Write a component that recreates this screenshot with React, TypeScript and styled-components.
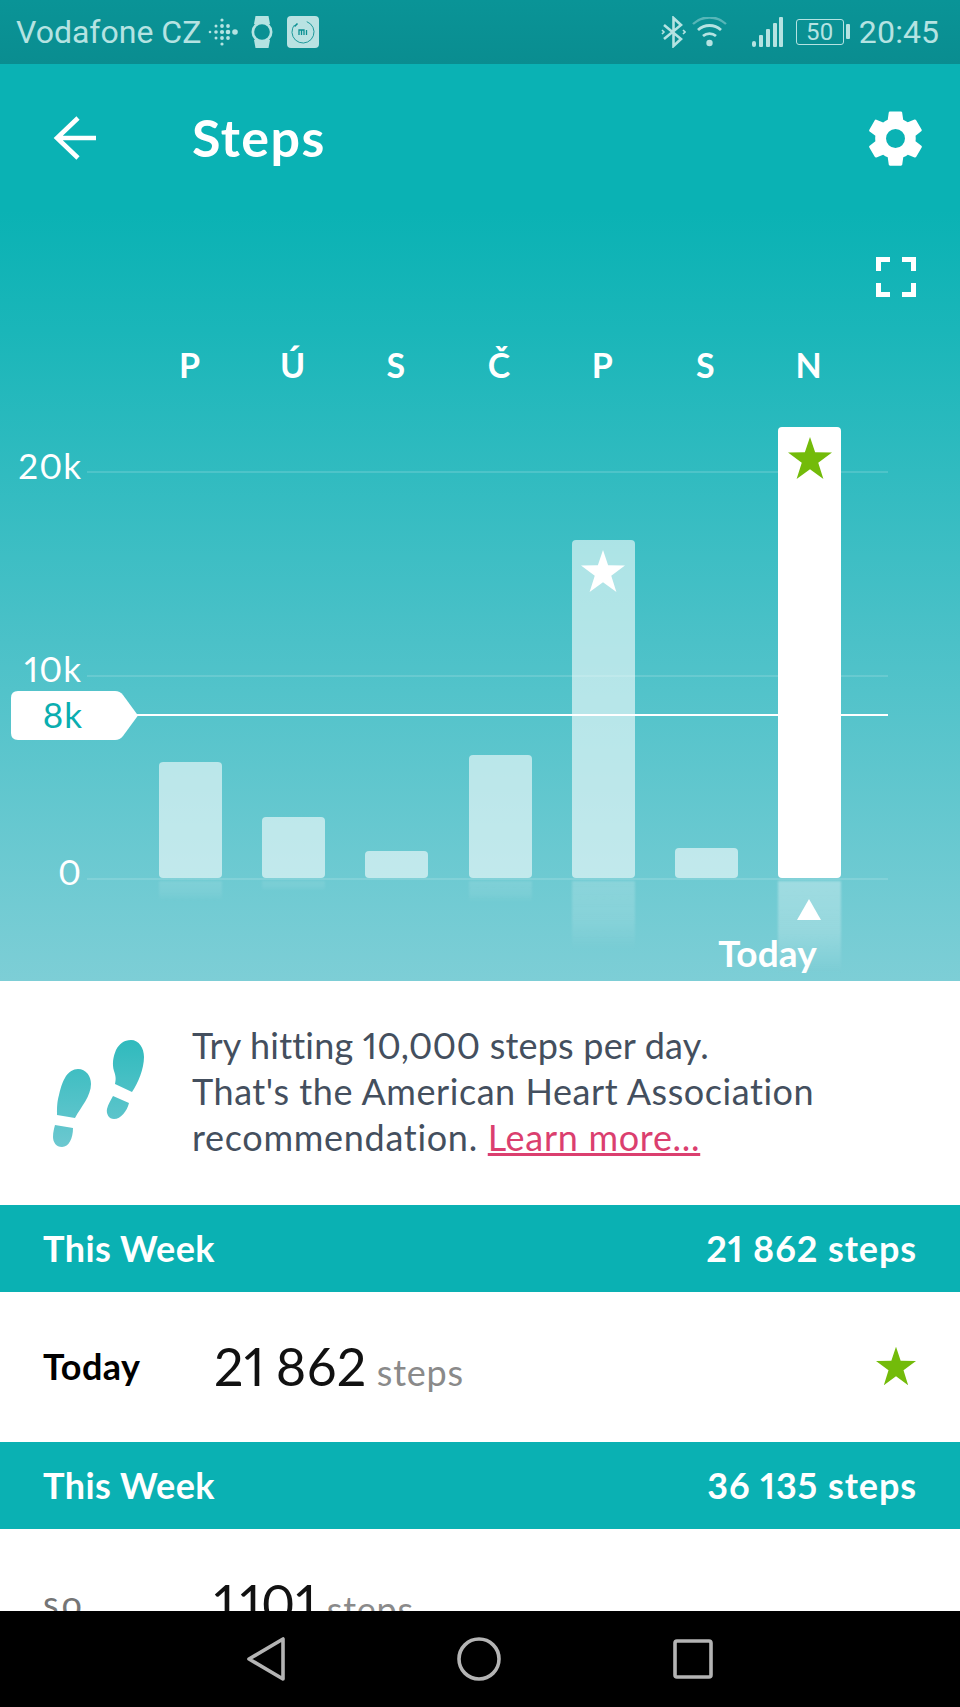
import React from "react";
import styled, { createGlobalStyle } from "styled-components";

const GlobalStyle = createGlobalStyle`
  html, body {
    margin: 0;
    padding: 0;
    background: #ffffff;
  }
  * {
    box-sizing: border-box;
  }
`;

const FONT = `"Lato", "Open Sans", sans-serif`;

const Screen = styled.div`
  width: 960px;
  height: 1707px;
  overflow: hidden;
  display: flex;
  flex-direction: column;
  background: #ffffff;
  font-family: ${FONT};
  font-variant-numeric: proportional-nums;
`;

const StatusBar = styled.div`
  flex: 0 0 64px;
  display: flex;
  align-items: center;
  padding: 0 21px 0 16px;
  background: linear-gradient(#0a9497, #0a8d90);
  color: #b5e3e2;
  font-family: "Roboto", sans-serif;
  font-size: 32px;
`;

const StatusIcon = styled.div<{ $gap: number }>`
  display: flex;
  margin-left: ${(p) => p.$gap}px;
`;

const Spacer = styled.div`
  flex: 1;
`;

const Hero = styled.div`
  flex: 0 0 917px;
  display: flex;
  flex-direction: column;
  background: linear-gradient(
    #0ab2b4 0%,
    #0ab2b4 16%,
    #1ab6b9 29%,
    #4bc1c8 63%,
    #7dced6 100%
  );
  color: #ffffff;
`;

const Header = styled.div`
  flex: 0 0 148px;
  display: flex;
  align-items: center;
  padding: 0 32px 0 53px;
`;

const Title = styled.div`
  margin-left: 95px;
  padding-bottom: 2px;
  font-size: 52px;
  font-weight: 700;
  letter-spacing: 1.4px;
  flex: 1;
`;

const FullscreenRow = styled.div`
  display: flex;
  justify-content: flex-end;
  padding: 0 44px 0 0;
  height: 40px;
  margin-top: 45px;
`;

const DayRow = styled.div`
  display: grid;
  grid-template-columns: repeat(7, 63px);
  column-gap: 40.2px;
  margin: 48px 0 0 158px;
  height: 40px;
`;

const Day = styled.div`
  text-align: center;
  font-size: 34px;
  font-weight: 700;
  line-height: 40px;
`;

const Plot = styled.div`
  position: relative;
  flex: 0 0 451px;
  margin-top: 42px;
  padding-left: 159px;
  display: flex;
  align-items: flex-end;
  gap: 40.2px;
`;

const GridLine = styled.div<{ $y: number }>`
  position: absolute;
  left: 87px;
  right: 72px;
  top: ${(p) => p.$y}px;
  height: 2px;
  background: rgba(255, 255, 255, 0.14);
`;

const AxisLabel = styled.div<{ $y: number }>`
  position: absolute;
  right: 878px;
  top: ${(p) => p.$y - 24}px;
  font-size: 35px;
  letter-spacing: 1px;
  line-height: 44px;
`;

const BarSlot = styled.div`
  position: relative;
  width: 63px;
  height: 100%;
  display: flex;
  align-items: flex-end;
`;

const Bar = styled.div<{ $h: number; $today?: boolean }>`
  width: 100%;
  height: ${(p) => p.$h}px;
  display: flex;
  justify-content: center;
  padding-top: 9px;
  border-radius: 4px;
  background: ${(p) => (p.$today ? "#ffffff" : "rgba(255, 255, 255, 0.58)")};
`;

const Reflection = styled.div<{ $h: number; $alpha: number }>`
  position: absolute;
  left: 0;
  right: 0;
  top: calc(100% + 3px);
  height: ${(p) => p.$h}px;
  filter: blur(1px);
  background: linear-gradient(
    rgba(255, 255, 255, ${(p) => p.$alpha}),
    rgba(255, 255, 255, ${(p) => p.$alpha * 0.7}) 55%,
    rgba(255, 255, 255, 0)
  );
`;

const GoalLine = styled.div`
  position: absolute;
  left: 130px;
  right: 72px;
  top: 287px;
  height: 2px;
  background: #ffffff;
`;

const GoalTag = styled.div`
  position: absolute;
  left: 11px;
  top: 264px;
  width: 127px;
  height: 49px;
  padding: 0 23px 4px 0;
  display: flex;
  align-items: center;
  justify-content: center;
  background: #ffffff;
  color: #0aaeb0;
  font-size: 35px;
  letter-spacing: 1px;
  clip-path: path(
    "M7 0H104Q109 0 112 4L127 24.5L112 45Q109 49 104 49H7Q0 49 0 42V7Q0 0 7 0Z"
  );
`;

const TodayMark = styled.div`
  flex: 1;
  position: relative;
  display: flex;
  flex-direction: column;
  align-items: flex-end;
`;

const Triangle = styled.div`
  position: absolute;
  left: 797px;
  top: 21px;
  width: 0;
  height: 0;
  border-left: 12px solid transparent;
  border-right: 12px solid transparent;
  border-bottom: 21px solid #ffffff;
`;

const TodayText = styled.div`
  margin: 54px 143px 0 0;
  font-size: 37px;
  font-weight: 700;
  letter-spacing: 0.2px;
  line-height: 42px;
`;

const Scroller = styled.div`
  flex: 1;
  min-height: 0;
  overflow: hidden;
  display: flex;
  flex-direction: column;
`;

const Tip = styled.div`
  flex: 0 0 224px;
  display: flex;
  align-items: center;
  padding: 0 0 4px 53px;
`;

const FootprintBox = styled.div`
  display: flex;
  margin-top: 4px;
`;

const TipText = styled.div`
  margin-left: 47px;
  font-size: 36px;
  line-height: 46px;
  color: #444f5e;
`;

const TipLine = styled.div<{ $track: number }>`
  letter-spacing: ${(p) => p.$track}px;
`;

const TipLink = styled.span`
  color: #db3f6f;
  text-decoration: underline;
`;

const Band = styled.div`
  flex: 0 0 87px;
  display: flex;
  align-items: center;
  justify-content: space-between;
  padding: 0 43px 2px;
  background: #0ab1b3;
  color: #ffffff;
  font-size: 36px;
  font-weight: 700;
  letter-spacing: 0.4px;
`;

const BandTotal = styled.span`
  letter-spacing: 0.9px;
`;

const Row = styled.div`
  flex: 0 0 150px;
  display: flex;
  align-items: center;
  padding: 0 44px 3px 43px;
`;

const RowDay = styled.div<{ $muted?: boolean }>`
  width: 171px;
  font-size: 36px;
  letter-spacing: ${(p) => (p.$muted ? 3 : 0.5)}px;
  font-weight: ${(p) => (p.$muted ? 400 : 700)};
  color: ${(p) => (p.$muted ? "#757575" : "#000000")};
`;

const RowValue = styled.div<{ $space: number }>`
  flex: 1;
  font-size: 52px;
  letter-spacing: 0.5px;
  word-spacing: ${(p) => p.$space}px;
  color: #111111;
`;

const RowUnit = styled.span`
  margin-left: 10px;
  font-size: 36px;
  letter-spacing: 0.8px;
  color: #8a8a8a;
`;

const NavBar = styled.div`
  flex: 0 0 96px;
  display: flex;
  align-items: center;
  justify-content: center;
  gap: 172px;
  background: #000000;
`;

function Star({ size, color }: { size: number; color: string }) {
  return (
    <svg width={size} height={size} viewBox="0 0 24 24" fill={color}>
      <path d="M12 .5l2.8 8.4L24 9l-7.5 5.6 2.8 8.9-7.3-5.3-7.3 5.3 2.8-8.9L0 9l9.2-.1z" />
    </svg>
  );
}

function Fitbit() {
  const dots = [
    [2, 15, 1.3],
    [8, 9, 1.5], [8, 15, 1.8], [8, 21, 1.5],
    [14, 3, 1.6], [14, 9, 1.9], [14, 15, 2.1], [14, 21, 1.9], [14, 27, 1.6],
    [20, 9, 1.9], [20, 15, 2.3], [20, 21, 1.9],
    [27, 15, 2.8],
  ];
  return (
    <svg width="30" height="30" viewBox="0 0 30 30" fill="#b5e3e2">
      {dots.map(([x, y, r], i) => (
        <circle key={i} cx={x} cy={y} r={r} />
      ))}
    </svg>
  );
}

function Watch() {
  return (
    <svg width="22" height="32" viewBox="0 0 22 32" fill="#b5e3e2">
      <path d="M4.5 0h13l1.5 8H3zM3 24h16l-1.5 8h-13z" />
      <circle cx="11" cy="16" r="10.5" />
      <circle cx="11" cy="16" r="7.8" fill="#0a9093" />
    </svg>
  );
}

function MiFit() {
  return (
    <svg width="32" height="32" viewBox="0 0 32 32">
      <rect width="32" height="32" rx="4" fill="#b9e2e2" />
      <circle
        cx="16"
        cy="16"
        r="11"
        fill="none"
        stroke="#0a8f92"
        strokeWidth="0.8"
        strokeDasharray="55 14"
        transform="rotate(-70 16 16)"
      />
      <path d="M7.5 10.5l3-3" stroke="#0a8f92" strokeWidth="1.6" />
      <path
        d="M12 19v-5h5v5M14.5 14.5V19M19.5 14v5"
        fill="none"
        stroke="#0a8f92"
        strokeWidth="1.3"
      />
    </svg>
  );
}

function Bluetooth() {
  return (
    <svg width="25" height="32" viewBox="0 0 25 32" fill="none" stroke="#b5e3e2" strokeWidth="2.6">
      <path d="M3 9l17 14-7.5 7V2l7.5 7L3 23" />
      <path d="M1 14l2 2-2 2M22 14l2 2-2 2" strokeWidth="1.6" />
    </svg>
  );
}

function Wifi() {
  return (
    <svg width="35" height="30" viewBox="0 0 35 30" fill="none">
      <path d="M1 7a24 24 0 0 1 33 0" stroke="#b5e3e2" strokeOpacity="0.45" strokeWidth="2.4" />
      <path d="M6 13a17 17 0 0 1 23 0" stroke="#b5e3e2" strokeWidth="2.8" />
      <path d="M11 19a10 10 0 0 1 13 0" stroke="#b5e3e2" strokeWidth="2.8" />
      <circle cx="17.5" cy="26" r="3.2" fill="#b5e3e2" />
    </svg>
  );
}

function Signal() {
  return (
    <svg width="31" height="30" viewBox="0 0 31 30" fill="#b5e3e2">
      <rect x="0" y="24" width="4" height="6" rx="2" />
      <rect x="7" y="18" width="4" height="12" rx="1" />
      <rect x="14" y="12" width="4" height="18" rx="1" />
      <rect x="21" y="6" width="4" height="24" rx="1" />
      <rect x="27" y="0" width="4" height="30" rx="1" />
    </svg>
  );
}

const BatteryBox = styled.div`
  position: relative;
  width: 48px;
  height: 26px;
  margin-left: 13px;
  display: flex;
  align-items: center;
  justify-content: center;
  border: 1.5px solid #b5e3e2;
  border-radius: 3px;
  font-size: 24px;
  &::after {
    content: "";
    position: absolute;
    right: -7px;
    top: 4px;
    width: 4px;
    height: 15px;
    background: #b5e3e2;
    border-radius: 1px;
  }
`;

const Clock = styled.div`
  margin-left: 15px;
`;

function Back() {
  return (
    <svg width="44" height="44" viewBox="0 0 44 44" fill="none" stroke="#ffffff" strokeWidth="4.6">
      <path d="M43 22H4M25 2L4 22l21 20" />
    </svg>
  );
}

function Gear() {
  return (
    <svg width="65" height="65" viewBox="0 0 24 24" fill="#ffffff">
      <path d="M19.4 13c.04-.32.07-.66.07-1s-.03-.68-.07-1l2.1-1.65c.2-.15.25-.42.13-.64l-2-3.46c-.12-.22-.39-.3-.61-.22l-2.49 1a7.3 7.3 0 0 0-1.69-.98l-.38-2.65A.49.49 0 0 0 14 2h-4c-.25 0-.46.18-.49.42l-.38 2.65c-.61.25-1.17.59-1.69.98l-2.49-1a.5.5 0 0 0-.61.22l-2 3.46c-.13.22-.07.49.12.64L4.57 11c-.04.32-.07.66-.07 1s.03.68.07 1l-2.11 1.65c-.19.15-.25.42-.12.64l2 3.46c.12.22.39.3.61.22l2.49-1c.52.4 1.08.73 1.69.98l.38 2.65c.03.24.24.42.49.42h4c.25 0 .46-.18.49-.42l.38-2.65c.61-.25 1.17-.59 1.69-.98l2.49 1c.23.09.49 0 .61-.22l2-3.46c.12-.22.07-.49-.12-.64L19.4 13zM12 15.5a3.5 3.5 0 1 1 0-7 3.5 3.5 0 0 1 0 7z" />
    </svg>
  );
}

function Fullscreen() {
  return (
    <svg width="40" height="40" viewBox="0 0 40 40" fill="none" stroke="#ffffff" strokeWidth="5">
      <path d="M2.5 14V2.5H14M26 2.5h11.5V14M37.5 26v11.5H26M14 37.5H2.5V26" />
    </svg>
  );
}

function Footprints() {
  return (
    <svg width="92" height="109" viewBox="0 0 92 109">
      <defs>
        <linearGradient id="footFill" gradientUnits="userSpaceOnUse" x1="0" y1="0" x2="0" y2="108">
          <stop offset="0" stopColor="#2fbabd" />
          <stop offset="1" stopColor="#6cc8d0" />
        </linearGradient>
      </defs>
      <g fill="url(#footFill)">
        <path d="M78 1C86 1 91 9 91 18C91 30 85 44 79 53L62 45C63 40 63 38 61 32C59 25 60 18 63 11C66 5 71 1 78 1Z" />
        <path d="M60 57L76 64C74 72 68 80 61 80C56 80 53 75 54 70C55 65 58 61 60 57Z" />
        <path d="M25 30C33 30 38 37 38 45C38 57 28 68 22 79L4 76C4 68 4 63 6 56C8 47 10 42 13 37C16 33 20 30 25 30Z" />
        <path d="M2 86L20 89C20 99 16 108 9 108C3 108 0 103 0 98C0 93 1 90 2 86Z" />
      </g>
    </svg>
  );
}

function NavBack() {
  return (
    <svg width="38" height="44" viewBox="0 0 38 44" fill="none" stroke="#b4b4b4" strokeWidth="3.6" strokeLinejoin="round">
      <path d="M36 2v40L2 22z" />
    </svg>
  );
}

function NavHome() {
  return (
    <svg width="44" height="44" viewBox="0 0 44 44" fill="none" stroke="#b4b4b4" strokeWidth="3.6">
      <circle cx="22" cy="22" r="20" />
    </svg>
  );
}

function NavRecent() {
  return (
    <svg width="40" height="40" viewBox="0 0 40 40" fill="none" stroke="#b4b4b4" strokeWidth="3.6">
      <rect x="2" y="2" width="36" height="36" rx="2" />
    </svg>
  );
}

const days = ["P", "Ú", "S", "Č", "P", "S", "N"];

const bars = [
  { h: 116, ref: 20, alpha: 0.12 },
  { h: 61, ref: 10, alpha: 0.1 },
  { h: 27, ref: 0, alpha: 0 },
  { h: 123, ref: 22, alpha: 0.12 },
  { h: 338, ref: 68, alpha: 0.2, star: "#ffffff" },
  { h: 30, ref: 0, alpha: 0 },
  { h: 451, ref: 92, alpha: 0.34, star: "#73bb0a", today: true },
];

export default function App() {
  return (
    <Screen>
      <GlobalStyle />
      <StatusBar>
        <span>Vodafone CZ</span>
        <StatusIcon $gap={7}>
          <Fitbit />
        </StatusIcon>
        <StatusIcon $gap={13}>
          <Watch />
        </StatusIcon>
        <StatusIcon $gap={14}>
          <MiFit />
        </StatusIcon>
        <Spacer />
        <Bluetooth />
        <StatusIcon $gap={6}>
          <Wifi />
        </StatusIcon>
        <StatusIcon $gap={25}>
          <Signal />
        </StatusIcon>
        <BatteryBox>50</BatteryBox>
        <Clock>20:45</Clock>
      </StatusBar>
      <Hero>
        <Header>
          <Back />
          <Title>Steps</Title>
          <Gear />
        </Header>
        <FullscreenRow>
          <Fullscreen />
        </FullscreenRow>
        <DayRow>
          {days.map((d, i) => (
            <Day key={i}>{d}</Day>
          ))}
        </DayRow>
        <Plot>
          <GridLine $y={44} />
          <GridLine $y={248} />
          <GridLine $y={451} />
          <AxisLabel $y={40}>20k</AxisLabel>
          <AxisLabel $y={243}>10k</AxisLabel>
          <AxisLabel $y={446}>0</AxisLabel>
          <GoalLine />
          <GoalTag>8k</GoalTag>
          {bars.map((b, i) => (
            <BarSlot key={i}>
              <Bar $h={b.h} $today={b.today}>
                {b.star && <Star size={44} color={b.star} />}
              </Bar>
              {b.ref > 0 && <Reflection $h={b.ref} $alpha={b.alpha} />}
            </BarSlot>
          ))}
        </Plot>
        <TodayMark>
          <Triangle />
          <TodayText>Today</TodayText>
        </TodayMark>
      </Hero>
      <Scroller>
        <Tip>
          <FootprintBox>
            <Footprints />
          </FootprintBox>
          <TipText>
            <TipLine $track={0.19}>Try hitting 10,000 steps per day.</TipLine>
            <TipLine $track={0.55}>That's the American Heart Association</TipLine>
            <TipLine $track={0.7}>
              recommendation. <TipLink>Learn more...</TipLink>
            </TipLine>
          </TipText>
        </Tip>
        <Band>
          <span>This Week</span>
          <BandTotal>21 862 steps</BandTotal>
        </Band>
        <Row>
          <RowDay>Today</RowDay>
          <RowValue $space={-3}>
            21 862<RowUnit>steps</RowUnit>
          </RowValue>
          <Star size={40} color="#73bb0a" />
        </Row>
        <Band>
          <span>This Week</span>
          <BandTotal>36 135 steps</BandTotal>
        </Band>
        <Row>
          <RowDay $muted>so</RowDay>
          <RowValue $space={-9}>
            1 101<RowUnit>steps</RowUnit>
          </RowValue>
        </Row>
      </Scroller>
      <NavBar>
        <NavBack />
        <NavHome />
        <NavRecent />
      </NavBar>
    </Screen>
  );
}
